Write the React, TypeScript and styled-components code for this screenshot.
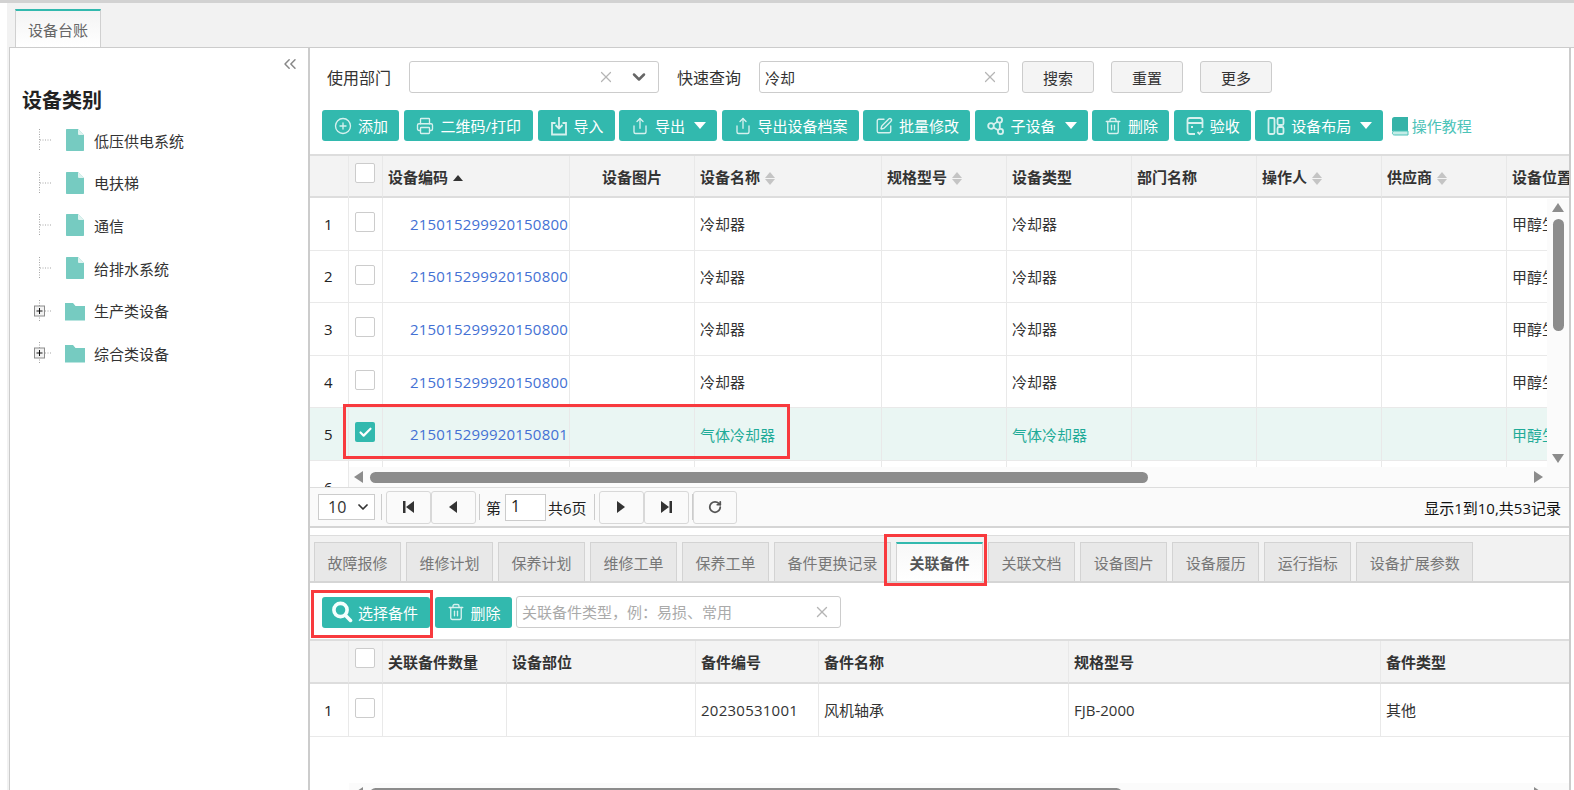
import React from 'react';
import styled, { createGlobalStyle } from 'styled-components';
import { CirclePlus, Printer, Share, SquarePen, Trash2, RotateCw, X, ChevronDown, ChevronsLeft, Check } from 'lucide-react';

const teal = '#32b9ae';

const GlobalStyle = createGlobalStyle`
    html, body {
        margin: 0;
        height: 100%;
        overflow: hidden;
        background: #fff;
        color: #333;
        font-family: "Open Sans", "Noto Sans CJK SC", sans-serif;
        font-size: 15px;
    }
    * { box-sizing: border-box; }
    #root { height: 100%; }
`;

// Small drawn icons
const ImportIcon = () => (
    <svg width="18" height="20" viewBox="0 0 18 20" fill="none" stroke="currentColor" strokeWidth="1.8">
        <path d="M5.5 7H2v11.5h14V7h-3.5M9 1v11M5.5 9 9 12.5 12.5 9" />
    </svg>
);
const MoleculeIcon = () => (
    <svg width="18" height="20" viewBox="0 0 18 20" fill="none" stroke="currentColor" strokeWidth="1.8">
        <circle cx="12.5" cy="4" r="2.6" /><circle cx="4" cy="10" r="2.8" /><circle cx="13.5" cy="15.5" r="2.6" />
        <path d="M10.4 5.6 6.4 8.6M6.5 11.5l4.7 2.8M12.8 7v5.8" />
    </svg>
);
const AcceptIcon = () => (
    <svg width="18" height="20" viewBox="0 0 18 20" fill="none" stroke="currentColor" strokeWidth="1.8">
        <path d="M9 18H4a2.5 2.5 0 0 1-2.5-2.5v-11A2.5 2.5 0 0 1 4 2h10a2.5 2.5 0 0 1 2.5 2.5V12M1.5 7h15M5 11h2M11.5 16l2 2 3-3.5" />
    </svg>
);
const LayoutIcon = () => (
    <svg width="18" height="20" viewBox="0 0 18 20" fill="none" stroke="currentColor" strokeWidth="1.8">
        <rect x="1.5" y="2" width="6" height="16" rx="1.5" /><rect x="10.5" y="2" width="6" height="7" rx="1.5" /><rect x="10.5" y="11" width="6" height="7" rx="1.5" />
    </svg>
);
const BookIcon = () => (
    <svg width="18" height="20" viewBox="0 0 18 20">
        <path d="M3.5 1H17v14H3.5A1.8 1.8 0 0 0 1 16.5V3.5A2.5 2.5 0 0 1 3.5 1Z" fill="#35b3a8" />
        <path d="M1.5 16.5A2 2 0 0 1 3.5 15H17v4H3.5a2 2 0 0 1-2-2.5Z" fill="#c4ece7" stroke="#4cc3b8" />
    </svg>
);
const SearchBoldIcon = () => (
    <svg width="22" height="22" viewBox="0 0 22 22" fill="none" stroke="#f4fffd" strokeWidth="3.6" strokeLinecap="round">
        <circle cx="9.5" cy="9" r="6.6" /><path d="M14.6 14.4 19.5 19.4" />
    </svg>
);
const FileIcon = () => (
    <svg width="20" height="24" viewBox="0 0 20 24"><path d="M1 1.500A.7.7 0 0 1 1.700 1H13l6 6v15.300a.7.7 0 0 1-.7.7H1.700a.7.7 0 0 1-.7-.7Z" fill="#76cbc1" /><path d="M13 1l6 6h-5a1 1 0 0 1-1-1Z" fill="#dff3f0" /></svg>
);
const FolderIcon = () => (
    <svg width="20" height="24" viewBox="0 0 20 24"><path d="M0 4h8l2.500 3H20v14.500H0Z" fill="#76cbc1" /></svg>
);
const Connector = ({ folder }: { folder?: boolean }) => (
    <svg width="22" height="24" viewBox="0 0 22 24" fill="none">
        <path d="M9.500 1v22M10 12h11" stroke="#a5a5a5" strokeDasharray="1 1.500" />
        {folder && (
            <>
                <rect x="4.500" y="7" width="10" height="10" fill="#f2f2f2" stroke="#8c8c8c" />
                <path d="M6.500 12h6M9.500 9v6" stroke="#111" />
            </>
        )}
    </svg>
);
const PagerIcon = ({ kind }: { kind: 'first' | 'prev' | 'next' | 'last' }) => {
    const d = {
        first: 'M2 2h2.500v12H2ZM13 2v12L5 8Z',
        prev: 'M11 2v12L3 8Z',
        next: 'M4 2v12l8-6Z',
        last: 'M3 2v12l8-6ZM11.500 2H14v12h-2.500Z',
    }[kind];
    return <svg width="16" height="16" viewBox="0 0 16 16"><path d={d} fill="#333" /></svg>;
};

const treeItems = [
    { label: '低压供电系统' },
    { label: '电扶梯' },
    { label: '通信' },
    { label: '给排水系统' },
    { label: '生产类设备', folder: true },
    { label: '综合类设备', folder: true },
];

const deviceColumns = [39, 34, 187, 125, 187, 125, 125, 125, 125, 125, 125];
const deviceHeads: { label: string; sort?: 'asc' | 'both'; center?: boolean }[] = [
    { label: '设备编码', sort: 'asc' },
    { label: '设备图片', center: true },
    { label: '设备名称', sort: 'both' },
    { label: '规格型号', sort: 'both' },
    { label: '设备类型' },
    { label: '部门名称' },
    { label: '操作人', sort: 'both' },
    { label: '供应商', sort: 'both' },
    { label: '设备位置' },
];
const deviceRows = [
    { code: '215015299920150800', name: '冷却器' },
    { code: '215015299920150800', name: '冷却器' },
    { code: '215015299920150800', name: '冷却器' },
    { code: '215015299920150800', name: '冷却器' },
    { code: '215015299920150801', name: '气体冷却器', selected: true },
    { code: '215015299920150800', name: '冷却器' },
];

const partColumns = [39, 34, 124, 189, 123, 250, 312, 190];
const partHeads = ['关联备件数量', '设备部位', '备件编号', '备件名称', '规格型号', '备件类型'];

const bottomTabs = ['故障报修', '维修计划', '保养计划', '维修工单', '保养工单', '备件更换记录', '关联备件', '关联文档', '设备图片', '设备履历', '运行指标', '设备扩展参数'];

const sum = (list: number[]) => list.reduce((a, b) => a + b, 0);

const SortMark = ({ sort }: { sort: 'asc' | 'both' }) => (
    <SortWrap $raise={sort === 'asc' ? 2 : 5}>
        <SortUp $active={sort === 'asc'} />
        {sort === 'both' && <SortDown />}
    </SortWrap>
);

export default function App() {
    return (
        <Page>
            <GlobalStyle />
            <TopStrip />
            <Shell>
                <TabBar>
                    <MainTab>设备台账</MainTab>
                </TabBar>
                <Body>
                    <Sidebar>
                        <CollapseRow><ChevronsLeft size={20} strokeWidth={1.8} /></CollapseRow>
                        <SidebarTitle>设备类别</SidebarTitle>
                        <TreeList>
                            {treeItems.map((item) => (
                                <TreeRow key={item.label}>
                                    <Connector folder={item.folder} />
                                    <TreeIcon>{item.folder ? <FolderIcon /> : <FileIcon />}</TreeIcon>
                                    <span>{item.label}</span>
                                </TreeRow>
                            ))}
                        </TreeList>
                    </Sidebar>

                    <Main>
                        <SearchRow>
                            <FieldLabel>使用部门</FieldLabel>
                            <Field $width={250}>
                                <FieldInput />
                                <ClearIcon><X size={18} strokeWidth={1.6} /></ClearIcon>
                                <SelectArrow><ChevronDown size={20} strokeWidth={3} /></SelectArrow>
                            </Field>
                            <FieldLabel $left={18}>快速查询</FieldLabel>
                            <Field $width={250}>
                                <FieldInput defaultValue="冷却" />
                                <ClearIcon><X size={18} strokeWidth={1.6} /></ClearIcon>
                            </Field>
                            <GreyButtons>
                                <GreyButton>搜索</GreyButton>
                                <GreyButton>重置</GreyButton>
                                <GreyButton>更多</GreyButton>
                            </GreyButtons>
                        </SearchRow>

                        <Toolbar>
                            <TealButton><CirclePlus size={18} strokeWidth={1.8} />添加</TealButton>
                            <PrintButton><Printer size={18} strokeWidth={1.8} />二维码/打印</PrintButton>
                            <TealButton><ImportIcon />导入</TealButton>
                            <TealButton><Share size={18} strokeWidth={1.8} />导出<Caret /></TealButton>
                            <TealButton><Share size={18} strokeWidth={1.8} />导出设备档案</TealButton>
                            <TealButton><SquarePen size={18} strokeWidth={1.8} />批量修改</TealButton>
                            <TealButton><MoleculeIcon />子设备<Caret /></TealButton>
                            <TealButton><Trash2 size={18} strokeWidth={1.8} />删除</TealButton>
                            <TealButton><AcceptIcon />验收</TealButton>
                            <TealButton><LayoutIcon />设备布局<Caret /></TealButton>
                            <TutorialLink><BookIcon />操作教程</TutorialLink>
                        </Toolbar>

                        <GridFrame>
                            <GridTable $width={sum(deviceColumns)}>
                                <colgroup>{deviceColumns.map((w, i) => <GridCol key={i} $width={w} />)}</colgroup>
                                <thead>
                                    <tr>
                                        <HeadCell />
                                        <HeadCell $box><CheckBox /></HeadCell>
                                        {deviceHeads.map((h) => (
                                            <HeadCell key={h.label} $center={h.center}>
                                                {h.label}{h.sort && <SortMark sort={h.sort} />}
                                            </HeadCell>
                                        ))}
                                    </tr>
                                </thead>
                                <tbody>
                                    {deviceRows.map((row, i) => (
                                        <GridRow key={i} $selected={row.selected}>
                                            <IndexCell>{i + 1}</IndexCell>
                                            <BoxCell>
                                                {row.selected ? <CheckedBox><Check size={15} strokeWidth={3.4} /></CheckedBox> : <CheckBox />}
                                            </BoxCell>
                                            <CodeCell>{row.code}</CodeCell>
                                            <BodyCell />
                                            <BodyCell>{row.name}</BodyCell>
                                            <BodyCell />
                                            <BodyCell>{row.name}</BodyCell>
                                            <BodyCell />
                                            <BodyCell />
                                            <BodyCell />
                                            <BodyCell>甲醇生产车间</BodyCell>
                                        </GridRow>
                                    ))}
                                </tbody>
                            </GridTable>
                            <FrozenIndex />
                            <VScroll>
                                <ArrowUp />
                                <VThumb />
                                <ArrowDown />
                            </VScroll>
                            <HScroll>
                                <ArrowLeft />
                                <HThumb $width={778} />
                                <ArrowRight />
                            </HScroll>
                        </GridFrame>

                        <Pager>
                            <PageSize>10<ChevronDown size={16} strokeWidth={2.6} /></PageSize>
                            <PagerSep />
                            <PagerButton><PagerIcon kind="first" /></PagerButton>
                            <PagerButton><PagerIcon kind="prev" /></PagerButton>
                            <PagerSep />
                            <PagerText $left={2}>第</PagerText>
                            <PageInput defaultValue="1" />
                            <PagerText $left={-1} $right={1}>共6页</PagerText>
                            <PagerSep />
                            <PagerButton><PagerIcon kind="next" /></PagerButton>
                            <PagerButton><PagerIcon kind="last" /></PagerButton>
                            <PagerSep />
                            <RefreshButton><RotateCw size={14} strokeWidth={3} color="#555" /></RefreshButton>
                            <PagerTotal>显示1到10,共53记录</PagerTotal>
                        </Pager>

                        <TabStrip>
                            {bottomTabs.map((t) => (
                                <SubTab key={t} $active={t === '关联备件'}>{t}</SubTab>
                            ))}
                        </TabStrip>

                        <PartToolbar>
                            <PickButton><SearchBoldIcon />选择备件</PickButton>
                            <TealButton><Trash2 size={18} strokeWidth={1.8} />删除</TealButton>
                            <Field $width={325}>
                                <FieldInput placeholder="关联备件类型，例：易损、常用" />
                                <ClearIcon><X size={18} strokeWidth={1.8} /></ClearIcon>
                            </Field>
                        </PartToolbar>

                        <PartGrid>
                            <GridTable $width={sum(partColumns)}>
                                <colgroup>{partColumns.map((w, i) => <GridCol key={i} $width={w} />)}</colgroup>
                                <thead>
                                    <tr>
                                        <PartHeadCell />
                                        <PartHeadCell $box><CheckBox /></PartHeadCell>
                                        {partHeads.map((h) => <PartHeadCell key={h}>{h}</PartHeadCell>)}
                                    </tr>
                                </thead>
                                <tbody>
                                    <GridRow>
                                        <IndexCell>1</IndexCell>
                                        <BoxCell><CheckBox /></BoxCell>
                                        <BodyCell />
                                        <BodyCell />
                                        <NumberCell>20230531001</NumberCell>
                                        <BodyCell>风机轴承</BodyCell>
                                        <BodyCell>FJB-2000</BodyCell>
                                        <BodyCell>其他</BodyCell>
                                    </GridRow>
                                </tbody>
                            </GridTable>
                            <PartScroll>
                                <ArrowLeft />
                                <HThumb $width={752} />
                                <ArrowRight />
                            </PartScroll>
                        </PartGrid>
                    </Main>
                </Body>
            </Shell>

            {/* red annotations drawn on the screenshot */}
            <Annotation $x={343} $y={404} $w={447} $h={55} />
            <Annotation $x={884} $y={534} $w={103} $h={52} />
            <Annotation $x={311} $y={590} $w={122} $h={48} />
        </Page>
    );
}

const Page = styled.div`
    display: flex;
    flex-direction: column;
    height: 100vh;
    overflow: hidden;
    position: relative;
    width: 100vw;
`;

const TopStrip = styled.div`
    background: #d2d2d2;
    flex: none;
    height: 3px;
`;

const Shell = styled.div`
    background: #f2f2f2;
    display: flex;
    flex: 1;
    flex-direction: column;
    margin-left: 7px;
    min-height: 0;
    padding-left: 2px;
`;

const TabBar = styled.div`
    align-items: flex-end;
    display: flex;
    flex: none;
    height: 44px;
    padding-left: 6px;
`;

const MainTab = styled.div`
    align-items: center;
    background: linear-gradient(#f4f4f4, #fff);
    border-left: 1px solid #d0d0d0;
    border-right: 1px solid #d0d0d0;
    border-top: 2px solid ${teal};
    color: #666;
    display: flex;
    height: 38px;
    justify-content: center;
    width: 86px;
`;

const Body = styled.div`
    background: #fff;
    border-left: 1px solid #ccc;
    border-top: 1px solid #ccc;
    display: flex;
    flex: 1;
    min-height: 0;
`;

const Sidebar = styled.div`
    border-right: 2px solid #ccc;
    flex: none;
    width: 300px;
`;

const CollapseRow = styled.div`
    color: #888;
    display: flex;
    height: 24px;
    justify-content: flex-end;
    padding: 6px 8px 0 0;
`;

const SidebarTitle = styled.h2`
    color: #222;
    font-size: 20px;
    font-weight: 700;
    line-height: 28px;
    margin: 15px 0 0 12px;
`;

const TreeList = styled.div`
    margin-top: 4px;
    padding-left: 20px;
`;

const TreeRow = styled.div`
    align-items: center;
    color: #333;
    display: flex;
    height: 42.6px;
`;

const TreeIcon = styled.span`
    display: flex;
    margin: 0 9px 0 13px;
`;

const Main = styled.div`
    border-right: 2px solid #ccc;
    display: flex;
    flex: 1;
    flex-direction: column;
    margin-right: 3px;
    min-width: 0;
`;

const SearchRow = styled.div`
    align-items: center;
    display: flex;
    flex: none;
    height: 32px;
    margin-top: 13px;
    padding-left: 17px;
`;

const FieldLabel = styled.label<{ $left?: number }>`
    color: #333;
    font-size: 16px;
    margin: 0 18px 0 ${(p) => p.$left || 0}px;
    white-space: nowrap;
`;

const Field = styled.div<{ $width: number }>`
    align-items: center;
    background: #fff;
    border: 1px solid #ccc;
    border-radius: 3px;
    display: flex;
    height: 32px;
    padding: 0 9px 0 5px;
    width: ${(p) => p.$width}px;
`;

const FieldInput = styled.input`
    background: transparent;
    border: 0;
    color: #333;
    flex: 1;
    font: inherit;
    min-width: 0;
    outline: 0;
    padding: 0;

    &::placeholder {
        color: #aaa;
    }
`;

const ClearIcon = styled.span`
    color: #b5b5b5;
    display: flex;
`;

const SelectArrow = styled.span`
    color: #666;
    display: flex;
    margin-left: 14px;
`;

const GreyButtons = styled.div`
    display: flex;
    gap: 17px;
    margin-left: 13px;
`;

const GreyButton = styled.button`
    background: #f4f4f4;
    border: 1px solid #ccc;
    border-radius: 3px;
    color: #333;
    font: inherit;
    height: 32px;
    padding: 0;
    width: 72px;
`;

const Toolbar = styled.div`
    align-items: center;
    display: flex;
    flex: none;
    gap: 4.5px;
    height: 31px;
    margin-top: 17px;
    padding-left: 12px;
`;

const TealButton = styled.button`
    align-items: center;
    background: ${teal};
    border: 0;
    border-radius: 3px;
    color: #fff;
    display: flex;
    flex: none;
    font: inherit;
    gap: 6px;
    height: 31px;
    padding: 0 11px 0 12px;
    white-space: nowrap;

    svg {
        flex: none;
        opacity: 0.8;
    }
`;

const PrintButton = styled(TealButton)`
    gap: 7px;
    padding: 0 12px;
`;

const PickButton = styled(TealButton)`
    gap: 5px;
    padding: 0 12px 0 9px;

    svg {
        opacity: 1;
    }
`;

const Caret = styled.i`
    border-left: 6px solid transparent;
    border-right: 6px solid transparent;
    border-top: 7px solid #fff;
    margin-left: 3px;
`;

const TutorialLink = styled.a`
    align-items: center;
    color: #4cc3b8;
    display: flex;
    gap: 3px;
    margin-left: 3px;
    white-space: nowrap;
`;

const GridFrame = styled.div`
    border-top: 2px solid #ddd;
    flex: none;
    height: 333px;
    margin-top: 13px;
    overflow: hidden;
    position: relative;
`;

const GridTable = styled.table<{ $width: number }>`
    border-collapse: separate;
    border-spacing: 0;
    table-layout: fixed;
    width: ${(p) => p.$width}px;
`;

const GridCol = styled.col<{ $width: number }>`
    width: ${(p) => p.$width}px;
`;

const HeadCell = styled.th<{ $center?: boolean; $box?: boolean }>`
    background: #f3f3f3;
    border-bottom: 2px solid #ddd;
    border-right: 1px solid #e8e8e8;
    color: #333;
    font-size: 15px;
    font-weight: 700;
    height: 42px;
    overflow: hidden;
    padding: ${(p) => (p.$box ? '7px 0 0 6px' : '0 5px')};
    text-align: ${(p) => (p.$center ? 'center' : 'left')};
    vertical-align: ${(p) => (p.$box ? 'top' : 'middle')};
    white-space: nowrap;
`;

const PartHeadCell = styled(HeadCell)`
    height: 43px;
`;

const GridRow = styled.tr<{ $selected?: boolean }>`
    background: ${(p) => (p.$selected ? '#eaf6f3' : '#fff')};
    color: ${(p) => (p.$selected ? '#1fab98' : '#333')};
`;

const BodyCell = styled.td`
    border-bottom: 1px solid #e9e9e9;
    border-right: 1px solid #e9e9e9;
    font-size: 15px;
    height: 52.600px;
    overflow: hidden;
    padding: 0 5px;
    white-space: nowrap;
`;

const IndexCell = styled(BodyCell)`
    color: #222;
    padding: 0 0 0 14px;
`;

const BoxCell = styled(BodyCell)`
    padding: 14px 0 0 6px;
    vertical-align: top;
`;

const CodeCell = styled(BodyCell)`
    color: #4471d4;
    letter-spacing: 0.2px;
    padding: 0 0 0 27px;
`;

const NumberCell = styled(BodyCell)`
    letter-spacing: 0.25px;
`;

const CheckBox = styled.span`
    background: #fff;
    border: 1px solid #ccc;
    border-radius: 2px;
    display: block;
    height: 20px;
    width: 20px;
`;

const CheckedBox = styled.span`
    align-items: center;
    background: ${teal};
    border-radius: 2px;
    color: #fff;
    display: flex;
    height: 20px;
    justify-content: center;
    width: 20px;
`;

const SortWrap = styled.span<{ $raise: number }>`
    display: inline-flex;
    flex-direction: column;
    gap: 1px;
    margin-left: 5px;
    vertical-align: ${(p) => p.$raise}px;
`;

const SortUp = styled.i<{ $active?: boolean }>`
    border-bottom: 6px solid ${(p) => (p.$active ? '#333' : '#c4c4c4')};
    border-left: 5px solid transparent;
    border-right: 5px solid transparent;
`;

const SortDown = styled.i`
    border-left: 5px solid transparent;
    border-right: 5px solid transparent;
    border-top: 6px solid #c4c4c4;
`;

const FrozenIndex = styled.div`
    border-right: 1px solid #e9e9e9;
    bottom: 0;
    left: 0;
    pointer-events: none;
    position: absolute;
    top: 0;
    width: 39px;
`;

const VScroll = styled.div`
    align-items: center;
    background: #fbfbfb;
    bottom: 20px;
    display: flex;
    flex-direction: column;
    padding: 4px 0;
    position: absolute;
    right: 0;
    top: 43px;
    width: 22px;
`;

const VThumb = styled.div`
    background: #8c8c8c;
    border-radius: 6px;
    height: 112px;
    margin-top: 7px;
    width: 11px;
`;

const ArrowUp = styled.i`
    border-bottom: 9px solid #8c8c8c;
    border-left: 6px solid transparent;
    border-right: 6px solid transparent;
`;

const ArrowDown = styled.i`
    border-left: 6px solid transparent;
    border-right: 6px solid transparent;
    border-top: 9px solid #8c8c8c;
    margin-top: auto;
`;

const ArrowLeft = styled.i`
    border-bottom: 6px solid transparent;
    border-right: 9px solid #8c8c8c;
    border-top: 6px solid transparent;
    flex: none;
    margin-right: 7px;
`;

const ArrowRight = styled.i`
    border-bottom: 6px solid transparent;
    border-left: 9px solid #8c8c8c;
    border-top: 6px solid transparent;
    flex: none;
    margin-left: auto;
`;

const HScroll = styled.div`
    align-items: center;
    background: #fbfbfb;
    bottom: 0;
    display: flex;
    height: 20px;
    left: 39px;
    padding: 0 26px 0 5px;
    position: absolute;
    right: 0;
`;

const HThumb = styled.div<{ $width: number }>`
    background: #8c8c8c;
    border-radius: 6px;
    flex: none;
    height: 11px;
    width: ${(p) => p.$width}px;
`;

const Pager = styled.div`
    align-items: center;
    background: #fafafa;
    border-bottom: 2px solid #d5d5d5;
    border-top: 1px solid #ddd;
    display: flex;
    flex: none;
    gap: 3px;
    height: 41px;
    padding: 0 8px;
`;

const PageSize = styled.div`
    align-items: center;
    background: #fff;
    border: 1px solid #ccc;
    display: flex;
    font-size: 16px;
    height: 26px;
    justify-content: space-between;
    padding: 0 3px 0 9px;
    width: 57px;
`;

const PagerSep = styled.div`
    background: #ccc;
    height: 26px;
    margin: 0 1px 0 3px;
    width: 1px;
`;

const PagerButton = styled.button`
    align-items: center;
    background: #fafafa;
    border: 1px solid #d8d8d8;
    border-radius: 3px;
    display: flex;
    height: 33px;
    justify-content: center;
    margin-right: -3px;
    padding: 0;
    width: 45px;
`;

const RefreshButton = styled(PagerButton)`
    margin-left: -4px;
    width: 44px;
`;

const PagerText = styled.span<{ $left: number; $right?: number }>`
    color: #222;
    margin-left: ${(p) => p.$left}px;
    margin-right: ${(p) => p.$right || 0}px;
    white-space: nowrap;
`;

const PageInput = styled.input`
    background: #fff;
    border: 1px solid #ccc;
    color: #222;
    font: inherit;
    font-size: 16px;
    height: 27px;
    margin-left: 1px;
    padding: 0 0 3px 5px;
    width: 41px;
`;

const PagerTotal = styled.span`
    color: #111;
    margin-left: auto;
    white-space: nowrap;
`;

const TabStrip = styled.div`
    align-items: flex-end;
    background: #f2f2f2;
    border-bottom: 2px solid #d5d5d5;
    border-top: 1px solid #ddd;
    display: flex;
    flex: none;
    gap: 5px;
    height: 48px;
    margin-top: 7px;
    padding-left: 4px;
`;

const SubTab = styled.div<{ $active?: boolean }>`
    align-items: center;
    background: ${(p) => (p.$active ? 'linear-gradient(#f8f8f8, #fff)' : '#e8e8e8')};
    border: 1px solid #d3d3d3;
    border-bottom: 0;
    border-top: ${(p) => (p.$active ? `2px solid ${teal}` : '1px solid #d3d3d3')};
    color: ${(p) => (p.$active ? '#555' : '#777')};
    display: flex;
    font-weight: ${(p) => (p.$active ? 700 : 400)};
    height: 39px;
    padding: 0 12.5px;
    white-space: nowrap;
`;

const PartToolbar = styled.div`
    align-items: center;
    display: flex;
    flex: none;
    gap: 4.5px;
    height: 32px;
    margin-top: 13px;
    padding-left: 12px;
`;

const PartGrid = styled.div`
    border-top: 2px solid #ddd;
    flex: 1;
    margin-top: 11px;
    min-height: 0;
    overflow: hidden;
    position: relative;
`;

const PartScroll = styled(HScroll)`
    bottom: auto;
    top: 142px;
`;

const Annotation = styled.div<{ $x: number; $y: number; $w: number; $h: number }>`
    border: 3px solid #f83a3e;
    height: ${(p) => p.$h}px;
    left: ${(p) => p.$x}px;
    pointer-events: none;
    position: absolute;
    top: ${(p) => p.$y}px;
    width: ${(p) => p.$w}px;
`;
